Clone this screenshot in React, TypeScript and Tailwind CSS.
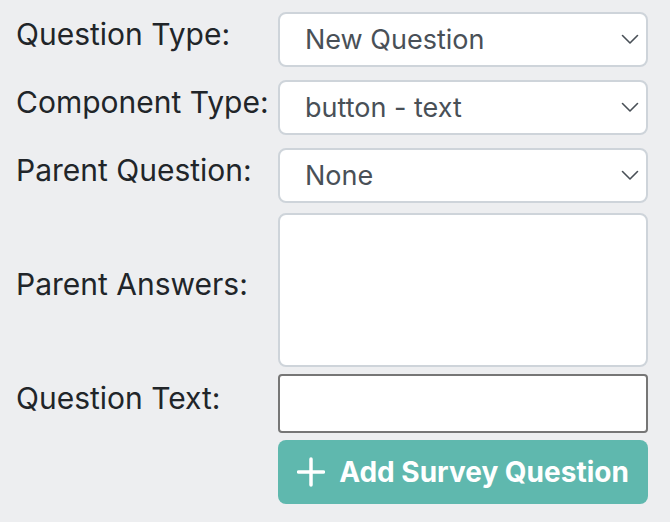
const font = { fontFamily: 'Inter, "Liberation Sans", sans-serif' };

function Row({ label, mt, children }: { label: string; mt: string; children: React.ReactNode }) {
  return (
    <div className={`flex items-center ${mt}`}>
      <label className="w-[278px] shrink-0 pb-3 pl-4 whitespace-nowrap text-[30px] leading-[36px] text-[#212529]">
        {label}
      </label>
      {children}
    </div>
  );
}

function Chevron() {
  return (
    <svg width="18" height="11" viewBox="0 0 18 11" fill="none" stroke="#495057" strokeWidth="1.6" strokeLinecap="round" strokeLinejoin="round">
      <polyline points="1.5,1.5 9,9 16.5,1.5" />
    </svg>
  );
}

function FakeSelect({ value }: { value: string }) {
  return (
    <div className="flex h-[55px] w-[370px] items-center justify-between rounded-lg border-2 border-[#ced4da] bg-white pl-[25px] pr-[7px] text-[27px] leading-[33px] text-[#495057]">
      <span>{value}</span>
      <Chevron />
    </div>
  );
}

export default function App() {
  return (
    <div className="h-[522px] w-[670px] overflow-hidden bg-[#edeef0]" style={font}>
      <Row label="Question Type:" mt="pt-3">
        <FakeSelect value="New Question" />
      </Row>
      <Row label="Component Type:" mt="mt-[13px]">
        <FakeSelect value="button - text" />
      </Row>
      <Row label="Parent Question:" mt="mt-[13px]">
        <FakeSelect value="None" />
      </Row>
      <Row label="Parent Answers:" mt="mt-[10px]">
        <div className="h-[154px] w-[370px] rounded-lg border-2 border-[#ced4da] bg-white" />
      </Row>
      <Row label="Question Text:" mt="mt-[7px]">
        <div className="h-[59px] w-[370px] rounded-[4px] border-2 border-[#767676] bg-white" />
      </Row>
      <div className="mt-[7px] pl-[278px]">
        <button className="flex h-[64px] w-[370px] items-center justify-center gap-[14px] rounded-lg bg-[#5fb8ae] text-[28px] font-bold text-white">
          <svg width="28" height="30" viewBox="0 0 28 30" fill="none" stroke="currentColor" strokeWidth="3.5" strokeLinecap="round">
            <line x1="14" y1="2" x2="14" y2="28" />
            <line x1="1.5" y1="15" x2="26.5" y2="15" />
          </svg>
          <span>Add Survey Question</span>
        </button>
      </div>
    </div>
  );
}
